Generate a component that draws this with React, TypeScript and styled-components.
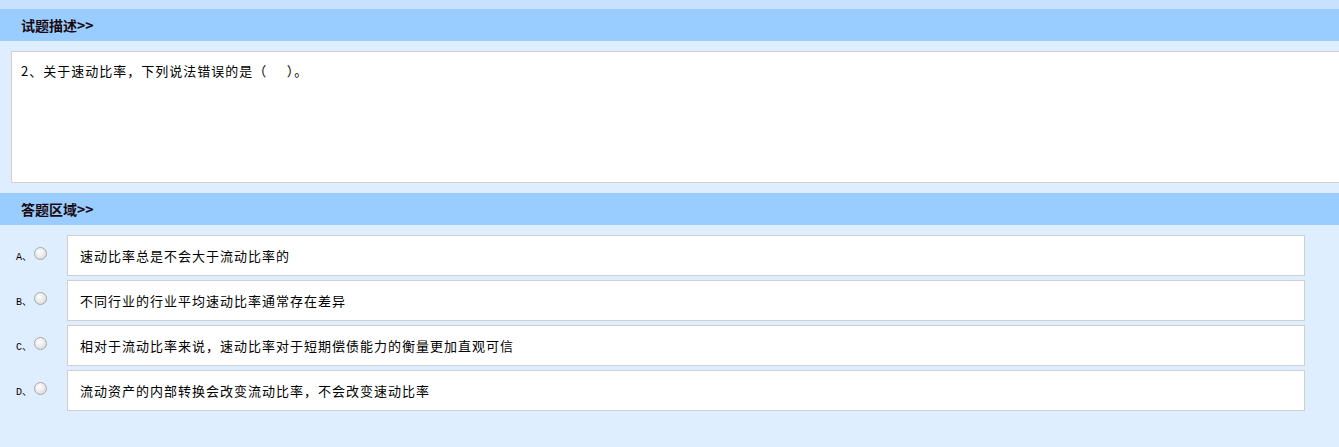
import React from 'react';
import styled, { createGlobalStyle } from 'styled-components';

const GlobalStyle = createGlobalStyle`
  html, body {
    margin: 0;
    padding: 0;
    background: #dfeefe;
    overflow: hidden;
  }
  body {
    font-family: "Noto Sans CJK SC", "Liberation Sans", sans-serif;
    color: #000;
  }
`;

const Page = styled.div`
  min-height: 447px;
  background: #dfeefe;
  border-top: 9px solid #c8e2fd;
  overflow: hidden;
`;

const SectionHeader = styled.div`
  height: 32px;
  background: #99ccff;
  display: flex;
  align-items: center;
  padding-left: 21px;
  font-size: 14px;
  font-weight: bold;
  color: #1a0a10;
`;

const QuestionBox = styled.div`
  margin: 10px -10px 10px 11px;
  height: 132px;
  background: #fff;
  border: 1px solid #cfcfcf;
  padding: 9px 9px;
  box-sizing: border-box;
  font-size: 13px;
  letter-spacing: 1px;
  line-height: 20px;
`;

const OptionList = styled.div`
  display: flex;
  flex-direction: column;
  gap: 4px;
  padding: 10px 0 0;
`;

const OptionRow = styled.div`
  display: flex;
  align-items: center;
`;

const Marker = styled.div`
  width: 67px;
  display: flex;
  align-items: center;
  padding-left: 16px;
  box-sizing: border-box;
`;

const Letter = styled.span`
  font-family: "Liberation Mono", "Noto Sans CJK SC", monospace;
  font-size: 10px;
  width: 18px;
  white-space: nowrap;
`;

const Radio = styled.span`
  width: 11px;
  height: 11px;
  border-radius: 50%;
  border: 1px solid #a8a8a8;
  background: radial-gradient(circle at 40% 35%, #ffffff 0%, #e8e8e8 55%, #cfcfcf 100%);
  margin-top: -4px;
`;

const OptionBox = styled.div`
  width: 1238px;
  height: 41px;
  box-sizing: border-box;
  background: #fff;
  border: 1px solid #cfcfcf;
  display: flex;
  align-items: center;
  padding-left: 12px;
  font-size: 13px;
  letter-spacing: 1px;
`;

const options = [
  { key: 'A', text: '速动比率总是不会大于流动比率的' },
  { key: 'B', text: '不同行业的行业平均速动比率通常存在差异' },
  { key: 'C', text: '相对于流动比率来说，速动比率对于短期偿债能力的衡量更加直观可信' },
  { key: 'D', text: '流动资产的内部转换会改变流动比率，不会改变速动比率' },
];

export default function App() {
  return (
    <Page>
      <GlobalStyle />
      <SectionHeader>试题描述&gt;&gt;</SectionHeader>
      <QuestionBox>2、关于速动比率，下列说法错误的是（&nbsp;&nbsp;&nbsp;&nbsp;&nbsp;）。</QuestionBox>
      <SectionHeader>答题区域&gt;&gt;</SectionHeader>
      <OptionList>
        {options.map((o) => (
          <OptionRow key={o.key}>
            <Marker>
              <Letter>{o.key}、</Letter>
              <Radio />
            </Marker>
            <OptionBox>{o.text}</OptionBox>
          </OptionRow>
        ))}
      </OptionList>
    </Page>
  );
}
